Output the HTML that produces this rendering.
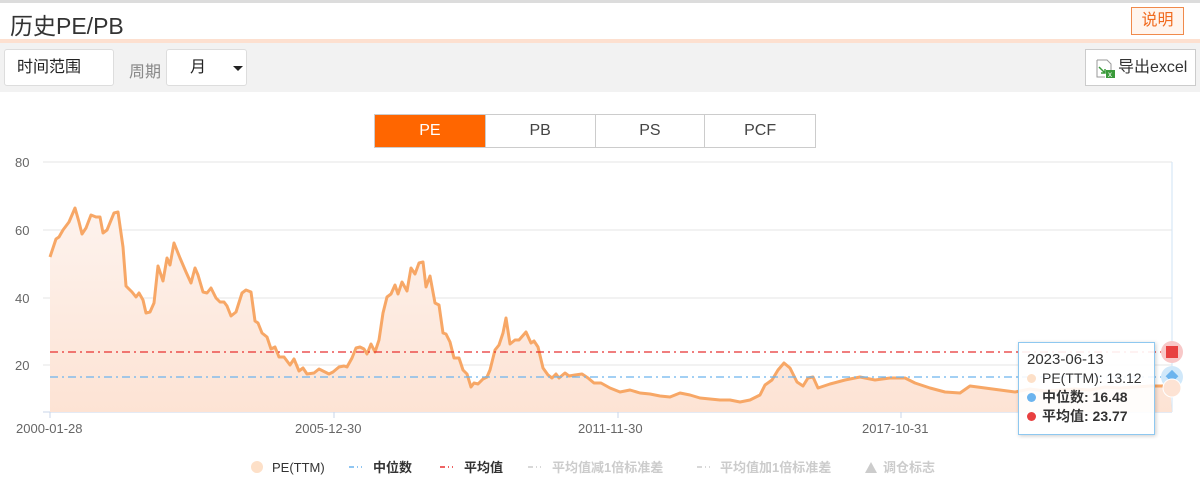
<!DOCTYPE html>
<html><head><meta charset="utf-8"><style>
*{margin:0;padding:0;box-sizing:border-box}
body{width:1200px;height:498px;background:#fff;font-family:"Liberation Sans","Noto Sans CJK SC",sans-serif;position:relative;overflow:hidden}
.abs{position:absolute}
</style></head><body>
<div class="abs" style="left:0;top:0;width:1200px;height:3px;background:#dcdcdc"></div>
<div class="abs" style="left:10px;top:7px;font-size:23px;color:#333">历史PE/PB</div>
<div class="abs" style="left:1131px;top:7px;width:53px;height:28px;border:1px solid #f08a4b;background:#fff5ee;color:#f06a1e;font-size:16px;text-align:center;line-height:26px">说明</div>
<div class="abs" style="left:0;top:39px;width:1200px;height:4px;background:#fde0d0"></div>
<div class="abs" style="left:0;top:43px;width:1200px;height:49px;background:#f2f2f2"></div>
<div class="abs" style="left:4px;top:49px;width:110px;height:37px;background:#fff;border:1px solid #ddd;border-radius:3px;font-size:16px;color:#222;line-height:35px;padding-left:12px">时间范围</div>
<div class="abs" style="left:129px;top:58px;font-size:16px;color:#888">周期</div>
<div class="abs" style="left:166px;top:49px;width:81px;height:37px;background:#fff;border:1px solid #ddd;border-radius:3px;font-size:16px;color:#222;line-height:35px;padding-left:23px">月<span style="position:absolute;left:66px;top:16px;border-left:5px solid transparent;border-right:5px solid transparent;border-top:5px solid #222"></span></div>
<div class="abs" style="left:1085px;top:49px;width:111px;height:37px;background:#fff;border:1px solid #ccc;font-size:16px;color:#333;line-height:35px;padding-left:32px">导出excel
<svg style="position:absolute;left:9px;top:9px" width="22" height="20"><path d="M2 1h10l4 4v8" fill="none" stroke="#999"/><path d="M2 1v17h8" fill="none" stroke="#999"/><path d="M4 8l6 6M10 10v4h-4" fill="none" stroke="#3a9a3a" stroke-width="1.5"/><rect x="11" y="11" width="9" height="8" fill="#3a9a3a"/><text x="13" y="18" font-size="8" fill="#fff" font-family="Liberation Sans">x</text></svg></div>
<div class="abs" style="left:374px;top:114px;width:442px;height:34px;border:1px solid #ccc;display:flex;font-size:16px;color:#444">
<div style="width:110px;background:#ff6600;color:#fff;text-align:center;line-height:32px">PE</div>
<div style="width:110px;border-left:1px solid #ccc;text-align:center;line-height:32px">PB</div>
<div style="width:110px;border-left:1px solid #ccc;text-align:center;line-height:32px">PS</div>
<div style="width:111px;border-left:1px solid #ccc;text-align:center;line-height:32px">PCF</div>
</div>
<svg class="abs" style="left:0;top:0" width="1200" height="498" font-family="Liberation Sans" >
<defs><linearGradient id="g" x1="0" y1="0" x2="0" y2="1"><stop offset="0" stop-color="#fdf3ee"/><stop offset="1" stop-color="#fde3d4"/></linearGradient></defs>
<g stroke="#e6e6e6"><line x1="43" y1="162" x2="1172" y2="162"/><line x1="43" y1="230" x2="1172" y2="230"/><line x1="43" y1="298" x2="1172" y2="298"/><line x1="43" y1="365" x2="1172" y2="365"/></g>
<line x1="1172" y1="162" x2="1172" y2="412" stroke="#cfe3f5"/>
<g fill="#666" font-size="13"><text x="15" y="167">80</text><text x="15" y="235">60</text><text x="15" y="303">40</text><text x="15" y="370">20</text>
<text x="16" y="433">2000-01-28</text><text x="295" y="433">2005-12-30</text><text x="578" y="433">2011-11-30</text><text x="862" y="433">2017-10-31</text></g>
<line x1="43" y1="412" x2="1172" y2="412" stroke="#c8d6ea"/>
<g stroke="#c8d6ea"><line x1="50" y1="412" x2="50" y2="418"/><line x1="334" y1="412" x2="334" y2="418"/><line x1="618" y1="412" x2="618" y2="418"/><line x1="901" y1="412" x2="901" y2="418"/></g>
<polygon fill="url(#g)" points="50,412 50,257 56,239 59,237 63,230 69,222 75,208 79,222 82,234 86,228 91,215 96,217 100,217 103,233 107,230 114,213 118,212 123,247 126,286 132,292 136,297 139,293 143,300 146,313 150,312 154,303 158,266 163,281 167,258 170,265 174,243 180,258 186,272 191,283 195,268 198,275 203,292 207,293 211,288 216,298 220,302 224,302 227,306 231,316 236,312 242,293 246,290 251,292 255,321 258,323 262,333 267,337 271,349 275,347 279,357 284,357 290,365 294,359 299,371 303,368 307,374 314,373 319,369 323,371 329,374 333,372 339,367 344,366 347,367 352,358 356,348 360,347 364,349 367,354 371,344 375,352 379,340 383,313 387,297 391,294 395,285 398,294 402,282 407,291 411,268 415,274 419,263 423,262 426,287 430,276 435,303 439,305 443,333 446,334 450,342 454,358 459,358 463,370 467,374 471,387 474,383 478,384 483,379 487,377 490,370 495,350 499,345 503,333 506,318 510,344 515,340 519,340 526,332 531,343 534,341 538,347 543,368 548,375 552,378 556,374 559,378 565,373 569,376 575,375 582,374 588,378 594,383 601,383 610,388 620,392 630,390 640,393 650,394 660,396 670,397 680,393 690,395 700,398 710,399 720,400 730,400 740,402 750,400 760,395 765,385 772,380 778,370 784,363 790,368 797,382 803,386 808,378 813,377 818,388 830,384 845,380 860,377 875,380 890,378 905,378 915,383 930,388 945,392 960,393 970,386 985,388 1000,390 1015,392 1030,389 1045,391 1060,390 1075,389 1090,390 1105,387 1120,388 1135,387 1150,386 1170,386 1172,412"/>
<polyline fill="none" stroke="#f7a766" stroke-width="3" stroke-linejoin="round" points="50,257 56,239 59,237 63,230 69,222 75,208 79,222 82,234 86,228 91,215 96,217 100,217 103,233 107,230 114,213 118,212 123,247 126,286 132,292 136,297 139,293 143,300 146,313 150,312 154,303 158,266 163,281 167,258 170,265 174,243 180,258 186,272 191,283 195,268 198,275 203,292 207,293 211,288 216,298 220,302 224,302 227,306 231,316 236,312 242,293 246,290 251,292 255,321 258,323 262,333 267,337 271,349 275,347 279,357 284,357 290,365 294,359 299,371 303,368 307,374 314,373 319,369 323,371 329,374 333,372 339,367 344,366 347,367 352,358 356,348 360,347 364,349 367,354 371,344 375,352 379,340 383,313 387,297 391,294 395,285 398,294 402,282 407,291 411,268 415,274 419,263 423,262 426,287 430,276 435,303 439,305 443,333 446,334 450,342 454,358 459,358 463,370 467,374 471,387 474,383 478,384 483,379 487,377 490,370 495,350 499,345 503,333 506,318 510,344 515,340 519,340 526,332 531,343 534,341 538,347 543,368 548,375 552,378 556,374 559,378 565,373 569,376 575,375 582,374 588,378 594,383 601,383 610,388 620,392 630,390 640,393 650,394 660,396 670,397 680,393 690,395 700,398 710,399 720,400 730,400 740,402 750,400 760,395 765,385 772,380 778,370 784,363 790,368 797,382 803,386 808,378 813,377 818,388 830,384 845,380 860,377 875,380 890,378 905,378 915,383 930,388 945,392 960,393 970,386 985,388 1000,390 1015,392 1030,389 1045,391 1060,390 1075,389 1090,390 1105,387 1120,388 1135,387 1150,386 1170,386"/>
<line x1="50" y1="352" x2="1172" y2="352" stroke="#e83030" stroke-width="1.3" stroke-dasharray="8,4,2,4"/>
<line x1="50" y1="377" x2="1172" y2="377" stroke="#6cb4ee" stroke-width="1.3" stroke-dasharray="8,4,2,4"/>
<circle cx="1172" cy="352" r="11" fill="#f8c8c8"/><rect x="1166" y="346" width="12" height="12" fill="#e84040"/>
<circle cx="1172" cy="377" r="11" fill="#d0e8fa"/><rect x="1167" y="372" width="9" height="9" fill="#6cb4ee" transform="rotate(45 1172 377)"/>
<circle cx="1172" cy="388" r="9" fill="#fde3d4" stroke="#fff"/>
<g font-weight="bold" font-size="13" font-family="Liberation Sans,Noto Sans CJK SC">
<circle cx="257" cy="467" r="6" fill="#fde0c8"/><text x="272" y="472" fill="#333" font-weight="normal">PE(TTM)</text>
<line x1="349" y1="467" x2="362" y2="467" stroke="#6cb4ee" stroke-width="1.5" stroke-dasharray="5,3,1,3"/><text x="373" y="472" fill="#333">中位数</text>
<line x1="440" y1="467" x2="453" y2="467" stroke="#e83030" stroke-width="1.5" stroke-dasharray="5,3,1,3"/><text x="464" y="472" fill="#333">平均值</text>
<line x1="528" y1="467" x2="541" y2="467" stroke="#ccc" stroke-width="1.5" stroke-dasharray="5,3,1,3"/><text x="552" y="472" fill="#ccc">平均值减1倍标准差</text>
<line x1="697" y1="467" x2="710" y2="467" stroke="#ccc" stroke-width="1.5" stroke-dasharray="5,3,1,3"/><text x="720" y="472" fill="#ccc">平均值加1倍标准差</text>
<polygon points="865,473 871,462 877,473" fill="#ccc"/><text x="883" y="472" fill="#ccc">调仓标志</text></g>
</svg>
<div class="abs" style="left:1018px;top:342px;width:137px;height:93px;background:rgba(255,255,255,0.9);border:1px solid #8ec8f0;box-shadow:1px 1px 4px rgba(0,0,0,0.2);font-size:14px;color:#333;padding:7px 0 0 8px;line-height:19px">
<div style="font-size:15px">2023-06-13</div>
<div><span style="display:inline-block;width:9px;height:9px;border-radius:50%;background:#fde0c8;margin-right:6px"></span>PE(TTM): 13.12</div>
<div style="font-weight:bold"><span style="display:inline-block;width:9px;height:9px;border-radius:50%;background:#6cb4ee;margin-right:6px"></span>中位数: 16.48</div>
<div style="font-weight:bold"><span style="display:inline-block;width:9px;height:9px;border-radius:50%;background:#e84040;margin-right:6px"></span>平均值: 23.77</div>
</div>
</body></html>
